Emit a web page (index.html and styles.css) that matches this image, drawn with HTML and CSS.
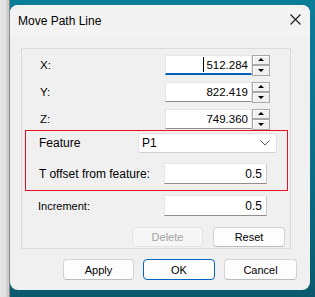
FILE: index.html
```html
<!DOCTYPE html>
<html lang="en">
<head>
  <meta charset="UTF-8">
  <meta name="viewport" content="width=device-width, initial-scale=1.0">
  <title>Move Path Line</title>
  <link rel="stylesheet" href="styles.css">
</head>
<body>
  <div class="backdrop-left"></div>

  <div class="dialog">
    <!-- Title bar -->
    <div class="titlebar">
      <span class="title">Move Path Line</span>
      <svg class="close" width="11" height="11" viewBox="0 0 11 11">
        <path d="M0.5 0.5 L10.5 10.5 M10.5 0.5 L0.5 10.5" stroke="#1b1b1b" stroke-width="1.1" fill="none"/>
      </svg>
    </div>

    <!-- Group box -->
    <div class="group">
      <div class="coords">
        <div class="coord-row">
          <span class="coord-label">X:</span>
          <div class="edit coord-edit focused"><span class="caret"></span>512.284</div>
          <div class="spin">
            <div class="spin-btn"><i class="up"></i></div>
            <div class="spin-btn"><i class="down"></i></div>
          </div>
        </div>
        <div class="coord-row">
          <span class="coord-label">Y:</span>
          <div class="edit coord-edit">822.419</div>
          <div class="spin">
            <div class="spin-btn"><i class="up"></i></div>
            <div class="spin-btn"><i class="down"></i></div>
          </div>
        </div>
        <div class="coord-row">
          <span class="coord-label">Z:</span>
          <div class="edit coord-edit">749.360</div>
          <div class="spin">
            <div class="spin-btn"><i class="up"></i></div>
            <div class="spin-btn"><i class="down"></i></div>
          </div>
        </div>
      </div>

      <div class="highlight">
        <div class="feature-row">
          <span class="feature-label">Feature</span>
          <div class="combo">
            <span>P1</span>
            <svg width="10" height="6" viewBox="0 0 10 6">
              <path d="M0.5 0.5 L5 5 L9.5 0.5" stroke="#5c5c5c" stroke-width="1" fill="none"/>
            </svg>
          </div>
        </div>
        <div class="offset-row">
          <span class="offset-label">T offset from feature:</span>
          <div class="edit value-edit">0.5</div>
        </div>
      </div>

      <div class="increment-row">
        <span class="increment-label">Increment:</span>
        <div class="edit value-edit">0.5</div>
      </div>

      <div class="group-buttons">
        <button class="btn" disabled>Delete</button>
        <button class="btn reset">Reset</button>
      </div>
    </div>

    <!-- Dialog buttons -->
    <div class="footer">
      <button class="btn apply">Apply</button>
      <button class="btn ok">OK</button>
      <button class="btn cancel">Cancel</button>
    </div>
  </div>
</body>
</html>
```

FILE: styles.css
```css
body {
  margin: 0;
  width: 315px;
  height: 297px;
  overflow: hidden;
  display: flex;
  align-items: flex-start;
  background: linear-gradient(#0c7d99, #0a6d84 60%, #0a5a6c);
  font-family: "Liberation Sans", Arial, sans-serif;
  font-size: 11px;
  color: #000;
}
.backdrop-left {
  flex: none;
  width: 10px;
  height: 297px;
  background: linear-gradient(to right, #e6e6e6 0, #e0e0e0 6px, #cbcbcb 7px, #cbcbcb 9px, #8a8a8a 9px);
}
.dialog {
  flex: none;
  width: 300px;
  height: 285px;
  margin-top: 5px;
  background: #f0f0f0;
  border-radius: 8px;
  overflow: hidden;
  display: flex;
  flex-direction: column;
}
.titlebar {
  flex: none;
  height: 31px;
  display: flex;
  align-items: center;
  justify-content: space-between;
  padding: 0 9px 0 8px;
  background: #f3f3f3;
}
.title {
  font-size: 12px;
}
.close {
  margin-top: -2px;
}

/* group box */
.group {
  flex: none;
  box-sizing: border-box;
  width: 270px;
  height: 201px;
  margin: 12px 0 0 11px;
  padding-top: 6px;
  border: 1px solid #dadada;
}
.coords {
  display: flex;
  flex-direction: column;
  gap: 7px;
}
.coord-row {
  display: flex;
  align-items: center;
  height: 20px;
}
.coord-label {
  box-sizing: border-box;
  width: 143px;
  padding-left: 18px;
  font-size: 11.5px;
}
.edit {
  box-sizing: border-box;
  background: #fff;
  border: 1px solid #e6e6e6;
  border-bottom-color: #8d8d8d;
  display: flex;
  align-items: center;
  justify-content: flex-end;
  padding-right: 3px;
  font-size: 11.5px;
}
.coord-edit {
  width: 87px;
  height: 20px;
}
.focused {
  border-bottom: 2px solid #0060b8;
}
.caret {
  width: 1px;
  height: 15px;
  background: #000;
  margin-right: 2px;
}
.spin {
  width: 18px;
  height: 21px;
  display: flex;
  flex-direction: column;
}
.spin-btn {
  flex: 1;
  box-sizing: border-box;
  border: 1px solid #a8a8a8;
  background: #f0f0f0;
  box-shadow: inset 1px 1px #fff;
  display: flex;
  align-items: center;
  justify-content: center;
}
.up {
  border-left: 3px solid transparent;
  border-right: 3px solid transparent;
  border-bottom: 3px solid #000;
}
.down {
  border-left: 3px solid transparent;
  border-right: 3px solid transparent;
  border-top: 3px solid #000;
}

/* highlighted feature block */
.highlight {
  box-sizing: border-box;
  width: 263px;
  height: 61px;
  margin: 1px 0 0 3px;
  padding-top: 2px;
  border: 1px solid #e81123;
  font-size: 12px;
}
.feature-row,
.offset-row {
  display: flex;
  align-items: center;
}
.feature-label {
  box-sizing: border-box;
  width: 112px;
  padding-left: 13px;
}
.combo {
  box-sizing: border-box;
  width: 139px;
  height: 20px;
  background: #fff;
  border: 1px solid #e2e2e2;
  border-bottom-color: #cfcfcf;
  border-radius: 3px;
  display: flex;
  align-items: center;
  justify-content: space-between;
  padding: 0 6px 0 3px;
}
.offset-row {
  margin-top: 10px;
}
.offset-label {
  box-sizing: border-box;
  width: 138px;
  padding-left: 13px;
}
.value-edit {
  width: 103px;
  height: 21px;
  padding-right: 4px;
  font-size: 12px;
  border-right-color: #c8c8c8;
}
.increment-row {
  display: flex;
  align-items: center;
  margin-top: 4px;
}
.increment-label {
  box-sizing: border-box;
  width: 142px;
  padding-left: 16px;
}
.group-buttons {
  display: flex;
  gap: 10px;
  margin: 11px 0 0 110px;
}

/* buttons */
.btn {
  box-sizing: border-box;
  height: 20px;
  padding: 0;
  font-family: "Liberation Sans", Arial, sans-serif;
  font-size: 11px;
  color: #000;
  background: #fdfdfd;
  border: 1px solid #d3d3d3;
  border-bottom-color: #bcbcbc;
  border-radius: 4px;
}
.btn[disabled] {
  width: 71px;
  color: #a2a2a2;
  background: #f6f6f6;
  border-color: #e4e4e4;
}
.reset {
  width: 72px;
}
.footer {
  display: flex;
  justify-content: flex-end;
  gap: 9px;
  margin-top: 10px;
  padding-right: 13px;
}
.footer .btn {
  height: 21px;
}
.apply {
  width: 71px;
}
.ok {
  width: 72px;
  border-color: #0067c0;
}
.cancel {
  width: 73px;
}
```
